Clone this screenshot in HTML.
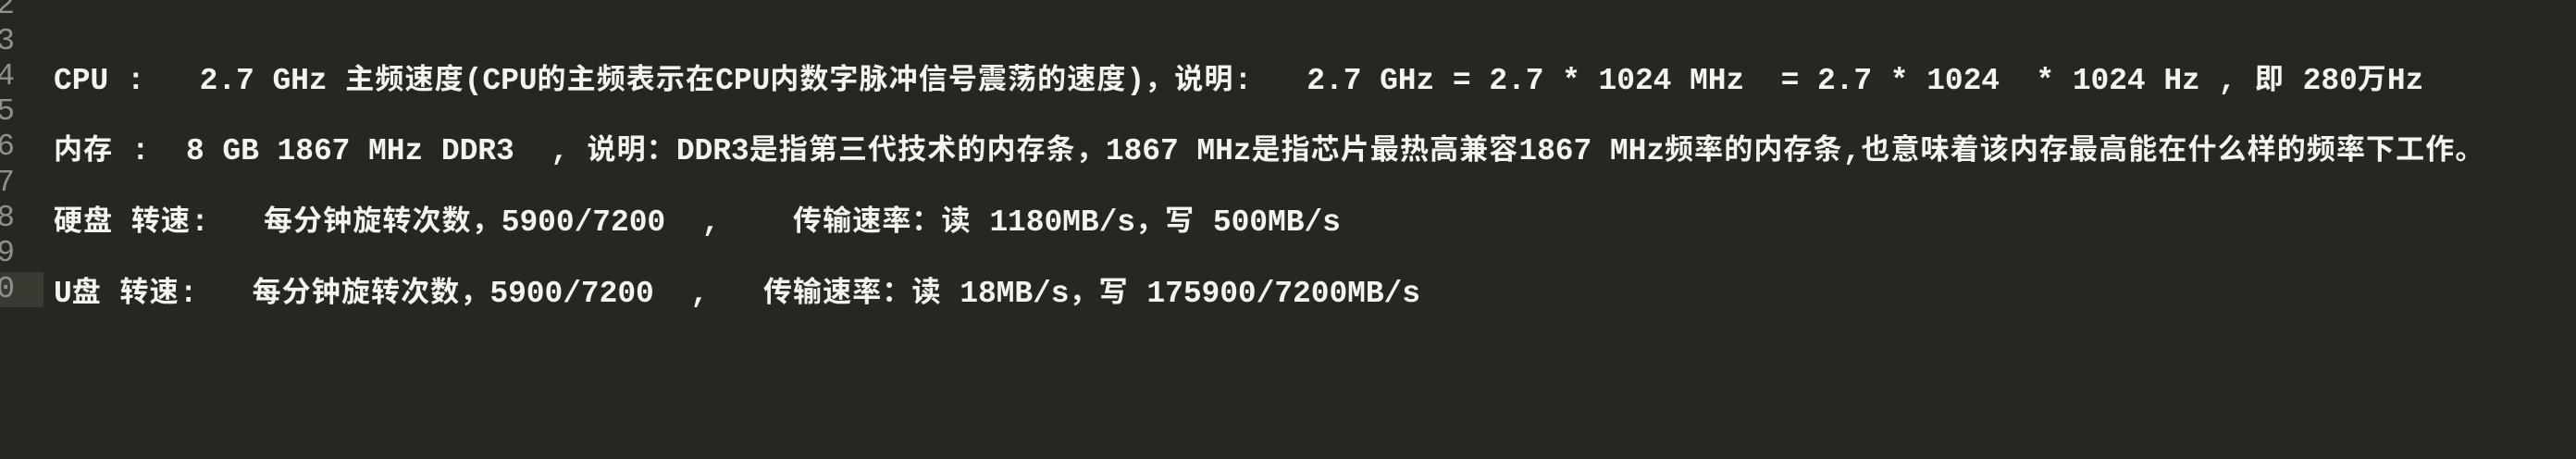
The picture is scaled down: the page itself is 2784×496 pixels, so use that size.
<!DOCTYPE html>
<html><head><meta charset="utf-8"><style>
html,body{margin:0;padding:0;}
body{width:2784px;height:496px;background:#262622;overflow:hidden;position:relative;font-family:"Liberation Mono","Noto Sans CJK SC",monospace;}
.l{position:absolute;left:58px;height:38px;line-height:38px;font-size:33px;color:#f4f4ee;white-space:pre;font-weight:bold;letter-spacing:-0.1px;}
.c{font-family:"Noto Sans CJK SC",sans-serif;font-size:31px;letter-spacing:1.1px;font-weight:bold;}
.n{position:absolute;left:-4px;width:20px;height:38px;line-height:38px;font-size:33px;color:#8f908a;font-family:"Liberation Mono",monospace;text-align:right;}
.hl{position:absolute;left:0;top:294px;width:47px;height:38px;background:#3a3a33;}
</style></head><body>
<div class="hl"></div>
<div class="n" style="top:-13px">2</div>
<div class="n" style="top:26px">3</div>
<div class="n" style="top:64px">4</div>
<div class="n" style="top:102px">5</div>
<div class="n" style="top:140px">6</div>
<div class="n" style="top:179px">7</div>
<div class="n" style="top:217px">8</div>
<div class="n" style="top:255px">9</div>
<div class="n" style="top:294px">0</div>

<div class="l" style="top:64px">CPU :   2.7 GHz <span class="c">主频速度</span>(CPU<span class="c">的主频表示在</span>CPU<span class="c">内数字脉冲信号震荡的速度</span>)<span class="c">，说明</span>:   2.7 GHz = 2.7 * 1024 MHz  = 2.7 * 1024  * 1024 Hz , <span class="c">即</span> 280<span class="c">万</span>Hz</div>
<div class="l" style="top:140px"><span class="c">内存</span> :  8 GB 1867 MHz DDR3  , <span class="c">说明：</span>DDR3<span class="c">是指第三代技术的内存条，</span>1867 MHz<span class="c">是指芯片最热高兼容</span>1867 MHz<span class="c">频率的内存条</span>,<span class="c">也意味着该内存最高能在什么样的频率下工作。</span></div>
<div class="l" style="top:217px"><span class="c">硬盘</span> <span class="c">转速</span>:   <span class="c">每分钟旋转次数，</span>5900/7200  ,    <span class="c">传输速率：读</span> 1180MB/s<span class="c">，写</span> 500MB/s</div>
<div class="l" style="top:294px">U<span class="c">盘</span> <span class="c">转速</span>:   <span class="c">每分钟旋转次数，</span>5900/7200  ,   <span class="c">传输速率：读</span> 18MB/s<span class="c">，写</span> 175900/7200MB/s</div>
</body></html>
